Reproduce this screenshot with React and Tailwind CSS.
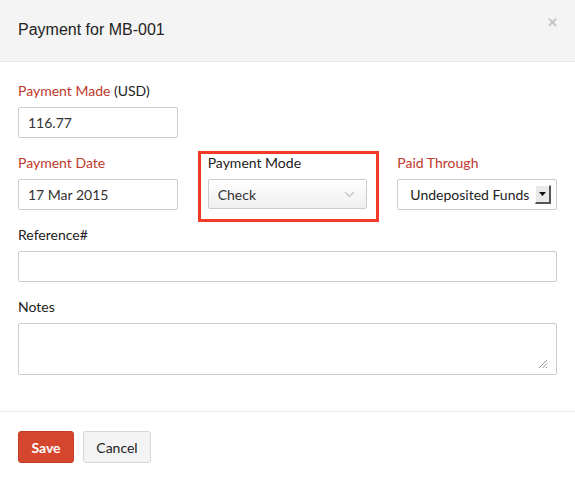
import React from "react";

function Label({ children, red }) {
    return (
        <p className={`h-5 leading-5 text-[14px] mb-[6px] ${red ? "text-[#c0392b]" : "text-[#222]"}`}>
            {children}
        </p>
    );
}

export default function App() {
    return (
        <div className="w-[575px] h-[478px] bg-white text-[#333]" style={{ fontFamily: "Lato, 'Open Sans', sans-serif" }}>
            <div className="h-[62px] bg-[#f4f4f4] border-b border-[#e6e6e6] flex items-center justify-between pl-[18px] pr-[17px]">
                <h1 className="text-[16px] text-[#222] font-normal -mt-[2px] font-['Liberation_Sans',Arial,sans-serif]">Payment for MB-001</h1>
                <span className="text-[#c4c4c4] text-[13px] font-bold -mt-[16px]">✕</span>
            </div>

            <div className="px-[18px] pt-[19px] pb-[36px] border-b border-[#ebebeb]">
                <Label red>
                    Payment Made <span className="text-[#222]">(USD)</span>
                </Label>
                <div className="w-[160px] h-[31px] border border-[#ccc] rounded-[2px] flex items-center px-[9px] text-[14px] text-[#333]">
                    116.77
                </div>

                <div className="flex gap-[30px] mt-[15px]">
                    <div className="w-[160px]">
                        <Label red>Payment Date</Label>
                        <div className="h-[31px] border border-[#ccc] rounded-[2px] flex items-center px-[9px] text-[14px]">
                            17 Mar 2015
                        </div>
                    </div>
                    <div className="w-[160px] relative">
                        <div className="absolute -left-[10px] -right-[12px] -top-[2px] -bottom-[12px] border-[3px] border-[#f23b26]"></div>
                        <Label>Payment Mode</Label>
                        <div className="h-[30px] border border-[#ccc] rounded-[2px] flex items-center justify-between px-[9px] text-[14px] bg-gradient-to-b from-white to-[#efefef]">
                            <span>Check</span>
                            <svg width="11" height="7" viewBox="0 0 11 7" className="mr-[2px]">
                                <path d="M1 1l4.5 4.5L10 1" fill="none" stroke="#c8c8c8" strokeWidth="1.4" />
                            </svg>
                        </div>
                    </div>
                    <div className="w-[160px]">
                        <Label red>Paid Through</Label>
                        <div className="h-[31px] border border-[#ccc] rounded-[2px] flex items-center justify-between pl-[12px] pr-[5px] text-[14px] text-[#222]">
                            <span>Undeposited Funds</span>
                            <div className="w-[16px] h-[19px] bg-[#e9e9e9] border-r-2 border-b-2 border-[#555] border-t border-l border-t-white border-l-white flex items-center justify-center">
                                <svg width="7" height="4" viewBox="0 0 7 4">
                                    <path d="M0 0h7L3.5 4z" fill="#111" />
                                </svg>
                            </div>
                        </div>
                    </div>
                </div>

                <div className="mt-[15px]">
                    <Label>Reference#</Label>
                    <div className="h-[31px] border border-[#ccc] rounded-[2px]"></div>
                </div>

                <div className="mt-[15px]">
                    <Label>Notes</Label>
                    <div className="h-[52px] border border-[#ccc] rounded-[2px] relative">
                        <svg width="11" height="11" viewBox="0 0 11 11" className="absolute right-[8px] bottom-[5px]">
                            <path d="M10 2L2 10M10 5.5L5.5 10M10 9L9 10" stroke="#9a9a9a" strokeWidth="1" />
                        </svg>
                    </div>
                </div>
            </div>

            <div className="px-[18px] pt-[19px] flex gap-[9px]">
                <button className="h-[32px] w-[56px] rounded-[3px] bg-[#d6462f] text-white text-[14px] font-bold border border-[#c53d27]">
                    Save
                </button>
                <button className="h-[32px] w-[68px] rounded-[3px] bg-[#f3f3f3] text-[#222] text-[14px] border border-[#d6d6d6]">
                    Cancel
                </button>
            </div>
        </div>
    );
}
